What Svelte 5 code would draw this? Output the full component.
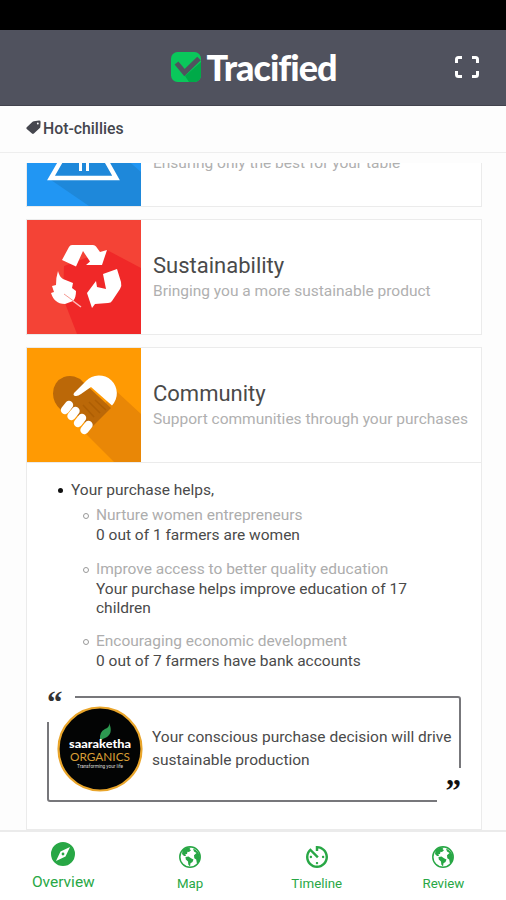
<script lang="ts">
	const impacts = [
		{ title: 'Nurture women entrepreneurs', text: '0 out of 1 farmers are women' },
		{
			title: 'Improve access to better quality education',
			text: 'Your purchase helps improve education of 17 children'
		},
		{ title: 'Encouraging economic development', text: '0 out of 7 farmers have bank accounts' }
	];

	const tabs = [
		{ label: 'Overview', icon: 'compass' },
		{ label: 'Map', icon: 'globe' },
		{ label: 'Timeline', icon: 'timer' },
		{ label: 'Review', icon: 'globe' }
	];

	let active = $state('Overview');
</script>

<div class="app">
	<div class="status-bar"></div>

	<header class="header">
		<div class="brand">
			<svg class="brand-mark" viewBox="0 0 30 30">
				<rect width="30" height="30" rx="6.5" fill="#0ac75b" />
				<path d="M14 24 30 10v13.5a6.5 6.5 0 0 1-6.5 6.5H18z" fill="#00aa48" />
				<path d="M5.500 11 13.500 20.500 28 6.500" fill="none" stroke="#50525e" stroke-width="5" />
			</svg>
			<span class="brand-name">Tracified</span>
		</div>
		<button class="scan" aria-label="Scan">
			<svg viewBox="0 0 24 22" fill="none" stroke="#fff" stroke-width="3">
				<path d="M1.500 7V3.500q0-2 2-2H7M17 1.500h3.500q2 0 2 2V7M22.500 15v3.500q0 2-2 2H17M7 20.500H3.500q-2 0-2-2V15" />
			</svg>
		</button>
	</header>

	<div class="product">
		<svg class="tag" viewBox="0 0 16 16">
			<path
				fill="#45464e"
				fill-rule="evenodd"
				d="M8.300 1.200 14 .5q1.600 0 1.600 1.500l-.3 5.200q0 .7-.6 1.300l-6.300 6q-1 .9-2 0L.8 9.600q-.9-1 0-2L7 1.800q.6-.5 1.300-.6zM12.600 2.700a1 1 0 1 0 0 2 1 1 0 0 0 0-2z"
			/>
		</svg>
		<span>Hot-chillies</span>
	</div>

	<main class="content">
		<section class="card">
			<svg class="tile" viewBox="0 0 114 114">
				<rect width="114" height="114" fill="#2196f3" />
				<path d="M24 88 57 30 114 80v34H62z" fill="#1e88da" />
				<path d="M57 29 89 86H24z" fill="none" stroke="#fff" stroke-width="4.500" />
				<path d="M53.500 55v24M60.500 55v24" stroke="#fff" stroke-width="3" />
			</svg>
			<div class="card-body partial">
				<p>Ensuring only the best for your table</p>
			</div>
		</section>

		<section class="card">
			<svg class="tile" viewBox="0 0 114 114">
				<rect width="114" height="114" fill="#f44336" />
				<path d="M80 30 114 48v66H50L36 78 37 46z" fill="#f02828" />
				<g fill="#fff">
					<path d="M35 40 42 27q1-2 3-2H66q2 0 3 1.500l4 5.500 7-2-5 15H59l4-3.500L56 31 49 46.500z" />
					<path d="M76 54 90 49 94 62q1 4-1 7L85 81q-1 2-4 2l-13 1-3 4-5-15 9-12 1 6 9 2z" />
					<path d="M31 51q1 5 5 8l10 4-1 5 4 3q0 7-3 10l-8 3q-6 0-9-3 -3-2-5-8l3-1-2-6 4-1q0-8 2-14z" />
				</g>
				<path d="M46 81 54 87" stroke="#fbb" stroke-width="1.500" />
				<path d="M37 74 48 82" stroke="#f69992" />
			</svg>
			<div class="card-body">
				<h2>Sustainability</h2>
				<p>Bringing you a more sustainable product</p>
			</div>
		</section>

		<section class="card">
			<svg class="tile" viewBox="0 0 114 114">
				<rect width="114" height="114" fill="#ff9a03" />
				<path d="M88 42 114 66v48H87L57 84z" fill="#e98706" />
				<path d="M34 62Q26 55 26 45.500A17 17 0 0 1 56 34L84 60 64 80 40 58z" fill="#bb6808" />
				<path
					d="M47 45 59 33A17.500 17.500 0 0 1 85 57.500L64 39 54 46q-4 3-7 1.500-1-1 0-2.500z"
					fill="#fff"
				/>
				<path d="M56 57 67 69M62 54 73 65M68 52 79 62" stroke="#ad5e04" stroke-width="1.500" />
				<g stroke="#fff" stroke-width="8.400" stroke-linecap="round">
					<path d="m42 57-4 5M48.500 63l-4 5M55 70l-4 5M61.500 77l-4 5" />
				</g>
			</svg>
			<div class="card-body">
				<h2>Community</h2>
				<p>Support communities through your purchases</p>
			</div>
		</section>

		<section class="details">
			<div class="helps">Your purchase helps,</div>
			<ul>
				{#each impacts as impact}
					<li>
						<span class="impact-title">{impact.title}</span>
						<span class="impact-text">{impact.text}</span>
					</li>
				{/each}
			</ul>

			<blockquote class="quote">
				<svg class="frame" viewBox="0 0 416 108" fill="none" stroke="#77777b" stroke-width="2">
					<path d="M29 2H412q2 0 2 2V73M391 106H4q-2 0-2-2V27" />
				</svg>
				<span class="mark open">“</span>
				<svg class="organics" viewBox="0 0 86 86">
					<circle cx="43" cy="43" r="41.500" fill="#030404" stroke="#e9a52b" stroke-width="2.200" />
					<path d="M43 34q-1-8 5-11 5-2 4-6 5 11-4 15-4 1-5 5z" fill="#2d9950" />
					<text x="12" y="42" textLength="62" lengthAdjust="spacingAndGlyphs" class="org-name">saaraketha</text>
					<text x="13" y="55" textLength="60" lengthAdjust="spacingAndGlyphs" class="org-type">ORGANICS</text>
					<text x="20" y="62" textLength="46" lengthAdjust="spacingAndGlyphs" class="org-line">Transforming your life</text>
				</svg>
				<p>Your conscious purchase decision will drive sustainable production</p>
				<span class="mark close">”</span>
			</blockquote>
		</section>
	</main>

	<nav class="tabs">
		{#each tabs as tab}
			<button class="tab" class:active={active === tab.label} onclick={() => (active = tab.label)}>
				{#if tab.icon === 'compass'}
					<svg viewBox="0 0 24 24" fill="currentColor">
						<path
							fill-rule="evenodd"
							d="M12 0a12 12 0 1 0 0 24 12 12 0 0 0 0-24zM19 5l-4.500 9.500L5 19l4.500-9.500zM12 10.600a1.400 1.400 0 1 0 0 2.800 1.400 1.400 0 0 0 0-2.800z"
						/>
					</svg>
				{:else if tab.icon === 'globe'}
					<svg viewBox="0 0 22 22" fill="currentColor">
						<circle cx="11" cy="11" r="10.200" fill="none" stroke="currentColor" stroke-width="1.500" />
						<path d="M3.500 4.500Q7 1 12 1.200L10.500 3 12 4.300 10 6 8.500 5.800 8 8 6.300 8.300 7 10H5L3 8z" />
						<path d="M6.500 11 9.500 10.500 12 12.300 14.500 13.500 13.500 16 11.500 17.200 11 20.500 9.300 18.500 9 15.500 6.800 13.500z" />
						<path d="M14 2.500Q20.500 5 21 11.500q0 4-3 6.500l-.8-4.500-1.900-1.300-.3-3L17.500 7 15 5.500z" />
					</svg>
				{:else}
					<svg viewBox="3 3 18 18" fill="currentColor">
						<path
							d="M11 17c0 .55.45 1 1 1s1-.45 1-1-.45-1-1-1-1 .45-1 1zm0-14v4h2V5.080c3.390.49 6 3.390 6 6.920 0 3.870-3.130 7-7 7s-7-3.130-7-7c0-1.680.59-3.220 1.580-4.420L12 13l1.410-1.410-6.800-6.800v.02C4.420 6.450 3 9.050 3 12c0 4.970 4.020 9 9 9 4.970 0 9-4.030 9-9s-4.030-9-9-9h-1zm7 9c0-.55-.45-1-1-1s-1 .45-1 1 .45 1 1 1 1-.45 1-1zM6 12c0 .55.45 1 1 1s1-.45 1-1-.45-1-1-1-1 .45-1 1z"
						/>
					</svg>
				{/if}
				<span>{tab.label}</span>
			</button>
		{/each}
	</nav>
</div>

<style>
	:global(body) {
		background: #fdfdfd;
	}

	.app {
		display: flex;
		flex-direction: column;
		height: 900px;
		overflow: hidden;
		font-family: Roboto, 'Liberation Sans', sans-serif;
		color: #4a4a4a;
	}

	.status-bar {
		height: 30px;
		background: #000;
	}

	.header {
		display: grid;
		grid-template-columns: 1fr auto 1fr;
		align-items: center;
		height: 76px;
		box-sizing: border-box;
		padding-right: 27px;
		padding-left: 29px;
		background: #50525e;
		border-bottom: 1px solid #42434e;
	}

	.brand {
		grid-column: 2;
		display: flex;
		align-items: center;
		gap: 5px;
	}

	.brand-mark {
		width: 30px;
		height: 30px;
	}

	.brand-name {
		font-family: Lato, sans-serif;
		font-size: 36px;
		line-height: 38px;
		font-weight: 900;
		letter-spacing: -1px;
		color: #fff;
	}

	.scan {
		justify-self: end;
		display: flex;
		padding: 0;
		border: none;
		background: none;
	}

	.scan svg {
		width: 24px;
		height: 22px;
	}

	.product {
		display: flex;
		align-items: center;
		gap: 2px;
		height: 46px;
		padding-left: 26px;
		border-bottom: 1px solid #eee;
		font-size: 15.800px;
		font-weight: 500;
		color: #45464e;
	}

	.tag {
		width: 15px;
		height: 15px;
		margin-top: -3px;
	}

	.content {
		display: flex;
		flex-direction: column;
		justify-content: flex-end;
		height: 668px;
		margin: 10px 24px 0 26px;
		overflow: hidden;
	}

	.card {
		display: flex;
		flex-shrink: 0;
		height: 114px;
		margin-bottom: 12px;
		border: 1px solid #ebebeb;
		background: #fff;
	}

	.card:nth-of-type(3) {
		margin-bottom: 0;
	}

	.tile {
		flex-shrink: 0;
		width: 114px;
		height: 114px;
	}

	.card-body {
		padding: 33px 0 0 12px;
		white-space: nowrap;
	}

	.partial {
		padding-top: 59px;
	}

	h2 {
		margin: 0;
		font-size: 22px;
		line-height: 26px;
		font-weight: 400;
		color: #4a4a4a;
	}

	.card p {
		margin: 0;
		font-size: 15.500px;
		line-height: 24px;
		color: #b0b0b0;
	}

	.details {
		box-sizing: border-box;
		flex-shrink: 0;
		height: 367px;
		padding: 16px 20px 0;
		border: 1px solid #ebebeb;
		border-top: none;
		background: #fff;
		font-size: 15.500px;
	}

	.helps {
		display: flex;
		align-items: center;
		gap: 8px;
		padding-left: 11px;
		line-height: 22px;
	}

	.helps::before {
		content: '';
		width: 5px;
		height: 5px;
		border-radius: 50%;
		background: #111;
	}

	ul {
		display: flex;
		flex-direction: column;
		gap: 13.500px;
		margin: 4px 0 0;
		padding: 0;
		list-style: none;
	}

	li {
		display: grid;
		grid-template-columns: 6px 335px;
		column-gap: 7px;
		padding-left: 36px;
	}

	li::before {
		content: '';
		box-sizing: border-box;
		width: 6px;
		height: 6px;
		margin-top: 8px;
		border: 1px solid #999;
		border-radius: 50%;
	}

	.impact-title {
		line-height: 21px;
		color: #adadad;
	}

	.impact-text {
		grid-column: 2;
		line-height: 19px;
	}

	.quote {
		position: relative;
		display: flex;
		align-items: center;
		gap: 9px;
		width: 416px;
		height: 108px;
		margin: 24px 0 0 -1px;
	}

	.quote p {
		margin: 0;
		line-height: 23px;
	}

	.frame {
		position: absolute;
		inset: 0;
		width: 416px;
		height: 108px;
	}

	.organics {
		flex-shrink: 0;
		width: 86px;
		height: 86px;
		margin-left: 11px;
	}

	.org-name {
		font-family: Lato, sans-serif;
		font-size: 11px;
		font-weight: 900;
		fill: #fff;
	}

	.org-type {
		font-family: Lato, sans-serif;
		font-size: 12px;
		fill: #d89d35;
	}

	.org-line {
		font-size: 4.500px;
		fill: #ddd;
	}

	.mark {
		position: absolute;
		font-family: 'Liberation Serif', serif;
		font-size: 31px;
		line-height: 32px;
		font-weight: 700;
		color: #333;
	}

	.open {
		top: -8px;
		left: 1px;
	}

	.close {
		right: 1px;
		bottom: -4px;
		color: #111;
	}

	.tabs {
		display: grid;
		grid-template-columns: repeat(4, 126.700px);
		height: 68px;
		border-top: 2px solid #ebebeb;
		background: #fff;
	}

	.tab {
		display: flex;
		flex-direction: column;
		align-items: center;
		gap: 7px;
		padding: 14px 0 0;
		border: none;
		background: none;
		font-family: inherit;
		font-size: 13.300px;
		line-height: 18px;
		color: #28a745;
	}

	.tab svg {
		width: 22px;
		height: 22px;
	}

	.tab.active {
		padding-top: 10px;
		font-size: 15.500px;
	}

	.tab.active svg {
		width: 24px;
		height: 24px;
	}
</style>
